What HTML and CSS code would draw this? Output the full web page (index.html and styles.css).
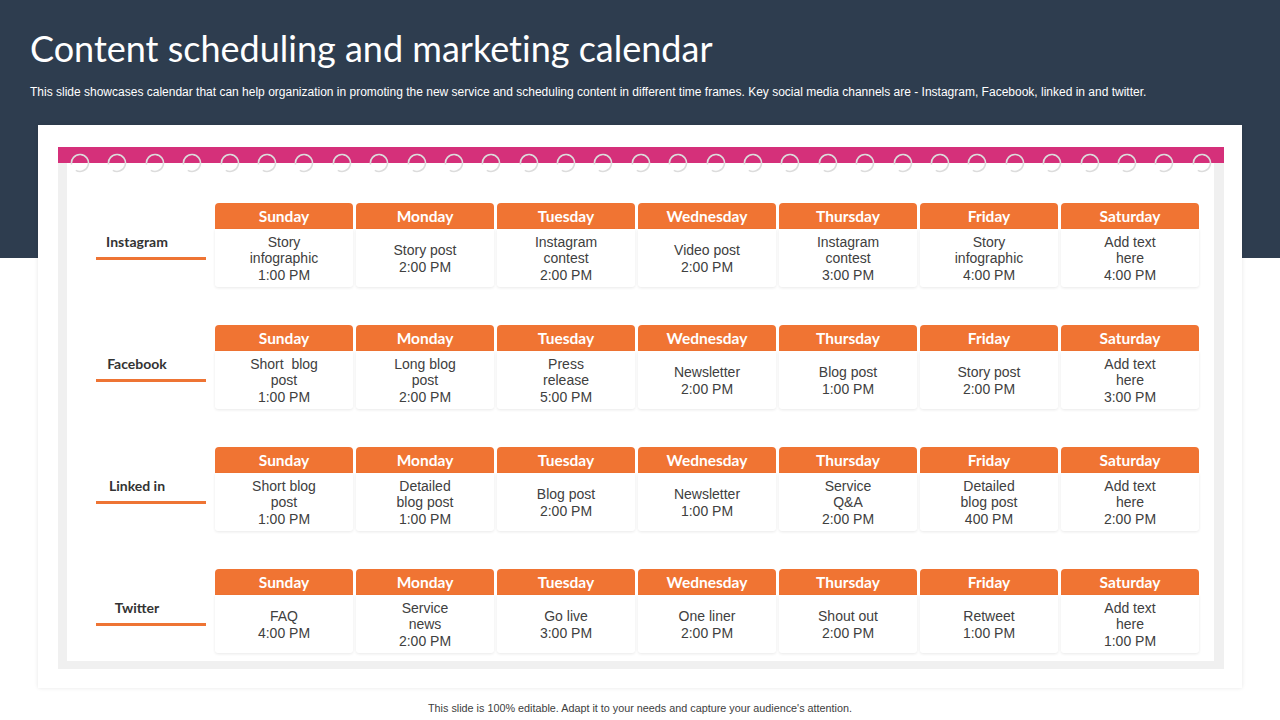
FILE: index.html
```html
<!DOCTYPE html>
<html lang="en">
<head>
<meta charset="utf-8">
<title>Content scheduling and marketing calendar</title>
<link rel="stylesheet" href="styles.css">
</head>
<body>
<div class="page">
  <header class="head">
    <h1 class="title">Content scheduling and marketing calendar</h1>
    <p class="subtitle">This slide showcases calendar that can help organization in promoting the new service and scheduling content in different time frames. Key social media channels are - Instagram, Facebook, linked in and twitter.</p>
  </header>

  <section class="card">
    <div class="calendar">
      <div class="binder">
        <div class="rings" id="rings"></div>
      </div>
      <div class="frame">
        <div class="sheet">

          <div class="row">
            <div class="label"><span class="label-text">Instagram</span><span class="label-line"></span></div>
            <div class="day"><div class="day-head">Sunday</div><div class="day-body">Story<br>infographic<br>1:00 PM</div></div>
            <div class="day"><div class="day-head">Monday</div><div class="day-body">Story post<br>2:00 PM</div></div>
            <div class="day"><div class="day-head">Tuesday</div><div class="day-body">Instagram<br>contest<br>2:00 PM</div></div>
            <div class="day"><div class="day-head">Wednesday</div><div class="day-body">Video post<br>2:00 PM</div></div>
            <div class="day"><div class="day-head">Thursday</div><div class="day-body">Instagram<br>contest<br>3:00 PM</div></div>
            <div class="day"><div class="day-head">Friday</div><div class="day-body">Story<br>infographic<br>4:00 PM</div></div>
            <div class="day"><div class="day-head">Saturday</div><div class="day-body">Add text<br>here<br>4:00 PM</div></div>
          </div>

          <div class="row">
            <div class="label"><span class="label-text">Facebook</span><span class="label-line"></span></div>
            <div class="day"><div class="day-head">Sunday</div><div class="day-body">Short&nbsp; blog<br>post<br>1:00 PM</div></div>
            <div class="day"><div class="day-head">Monday</div><div class="day-body">Long blog<br>post<br>2:00 PM</div></div>
            <div class="day"><div class="day-head">Tuesday</div><div class="day-body">Press<br>release<br>5:00 PM</div></div>
            <div class="day"><div class="day-head">Wednesday</div><div class="day-body">Newsletter<br>2:00 PM</div></div>
            <div class="day"><div class="day-head">Thursday</div><div class="day-body">Blog post<br>1:00 PM</div></div>
            <div class="day"><div class="day-head">Friday</div><div class="day-body">Story post<br>2:00 PM</div></div>
            <div class="day"><div class="day-head">Saturday</div><div class="day-body">Add text<br>here<br>3:00 PM</div></div>
          </div>

          <div class="row">
            <div class="label"><span class="label-text">Linked in</span><span class="label-line"></span></div>
            <div class="day"><div class="day-head">Sunday</div><div class="day-body">Short blog<br>post<br>1:00 PM</div></div>
            <div class="day"><div class="day-head">Monday</div><div class="day-body">Detailed<br>blog post<br>1:00 PM</div></div>
            <div class="day"><div class="day-head">Tuesday</div><div class="day-body">Blog post<br>2:00 PM</div></div>
            <div class="day"><div class="day-head">Wednesday</div><div class="day-body">Newsletter<br>1:00 PM</div></div>
            <div class="day"><div class="day-head">Thursday</div><div class="day-body">Service<br>Q&amp;A<br>2:00 PM</div></div>
            <div class="day"><div class="day-head">Friday</div><div class="day-body">Detailed<br>blog post<br>400 PM</div></div>
            <div class="day"><div class="day-head">Saturday</div><div class="day-body">Add text<br>here<br>2:00 PM</div></div>
          </div>

          <div class="row">
            <div class="label"><span class="label-text">Twitter</span><span class="label-line"></span></div>
            <div class="day"><div class="day-head">Sunday</div><div class="day-body">FAQ<br>4:00 PM</div></div>
            <div class="day"><div class="day-head">Monday</div><div class="day-body">Service<br>news<br>2:00 PM</div></div>
            <div class="day"><div class="day-head">Tuesday</div><div class="day-body">Go live<br>3:00 PM</div></div>
            <div class="day"><div class="day-head">Wednesday</div><div class="day-body">One liner<br>2:00 PM</div></div>
            <div class="day"><div class="day-head">Thursday</div><div class="day-body">Shout out<br>2:00 PM</div></div>
            <div class="day"><div class="day-head">Friday</div><div class="day-body">Retweet<br>1:00 PM</div></div>
            <div class="day"><div class="day-head">Saturday</div><div class="day-body">Add text<br>here<br>1:00 PM</div></div>
          </div>

        </div>
      </div>
    </div>
  </section>

  <footer class="foot">This slide is 100% editable. Adapt it to your needs and capture your audience's attention.</footer>
</div>
<script>
  var rings = document.getElementById('rings');
  var svg = '<svg class="ring" viewBox="0 0 20 20" width="20" height="20"><path d="M1.6 11.5 A8.5 8.5 0 1 1 5.8 17.4" fill="none" stroke="#dcdcdc" stroke-width="1.6"/></svg>';
  var html = '';
  for (var i = 0; i < 31; i++) html += svg;
  rings.innerHTML = html;
</script>
</body>
</html>
```

FILE: styles.css
```css
* { box-sizing: border-box; }

html, body {
  margin: 0;
  padding: 0;
}

body {
  width: 1280px;
  height: 720px;
  overflow: hidden;
  background: linear-gradient(#2e3d4f 0, #2e3d4f 258px, #ffffff 258px);
  font-family: "Liberation Sans", Arial, sans-serif;
}

.page {
  width: 1280px;
  height: 720px;
}

.head {
  padding: 25px 30px 0 30px;
  height: 125px;
}

.title {
  margin: 0;
  font-family: "Lato", "Open Sans", sans-serif;
  font-weight: 400;
  font-size: 36px;
  line-height: 46px;
  color: #ffffff;
  font-variant-ligatures: none;
}

.subtitle {
  margin: 13px 0 0 0;
  font-family: "Liberation Sans", Arial, sans-serif;
  font-size: 12px;
  line-height: 16px;
  color: #ffffff;
}

.card {
  margin: 0 38px;
  height: 563px;
  background: #ffffff;
  box-shadow: 0 0 4px rgba(0, 0, 0, 0.10);
  padding: 22px 18px 0 20px;
}

.calendar {
  width: 1166px;
}

.binder {
  position: relative;
  height: 16px;
  background: #d5307a;
}

.rings {
  position: absolute;
  left: 0;
  right: 0;
  top: 6px;
  padding: 0 12px;
  display: flex;
  justify-content: space-between;
}

.ring {
  display: block;
  width: 20px;
  height: 20px;
}

.frame {
  background: #f0f0f0;
  padding: 0 10px 8px 9px;
}

.sheet {
  background: #ffffff;
  padding: 40px 0 8px 0;
  display: flex;
  flex-direction: column;
  gap: 38px;
}

.row {
  display: grid;
  grid-template-columns: 145px repeat(7, 138px);
  column-gap: 3px;
}

.label {
  display: flex;
  flex-direction: column;
  justify-content: center;
  padding-left: 29px;
  padding-top: 2px;
}

.label-text {
  display: block;
  width: 82px;
  text-align: center;
  font-family: "Lato", "Open Sans", sans-serif;
  font-weight: 700;
  font-size: 14px;
  line-height: 17px;
  color: #333333;
}

.label-line {
  display: block;
  width: 110px;
  height: 3px;
  margin-top: 7px;
  background: #ee7434;
}

.day {
  display: flex;
  flex-direction: column;
}

.day-head {
  height: 26px;
  background: #f07433;
  border-radius: 4px 4px 0 0;
  color: #ffffff;
  font-family: "Lato", "Open Sans", sans-serif;
  font-weight: 700;
  font-size: 15.5px;
  line-height: 27px;
  text-align: center;
}

.day-body {
  height: 58px;
  background: #ffffff;
  box-shadow: 0 1px 3px rgba(0, 0, 0, 0.09);
  border-radius: 0 0 3px 3px;
  display: flex;
  align-items: center;
  justify-content: center;
  text-align: center;
  font-family: "Liberation Sans", Arial, sans-serif;
  font-size: 14px;
  line-height: 16.5px;
  padding-top: 1px;
  color: #404040;
}

.foot {
  margin-top: 13px;
  text-align: center;
  font-family: "Liberation Sans", Arial, sans-serif;
  font-size: 10.8px;
  line-height: 14px;
  color: #404040;
}
```
